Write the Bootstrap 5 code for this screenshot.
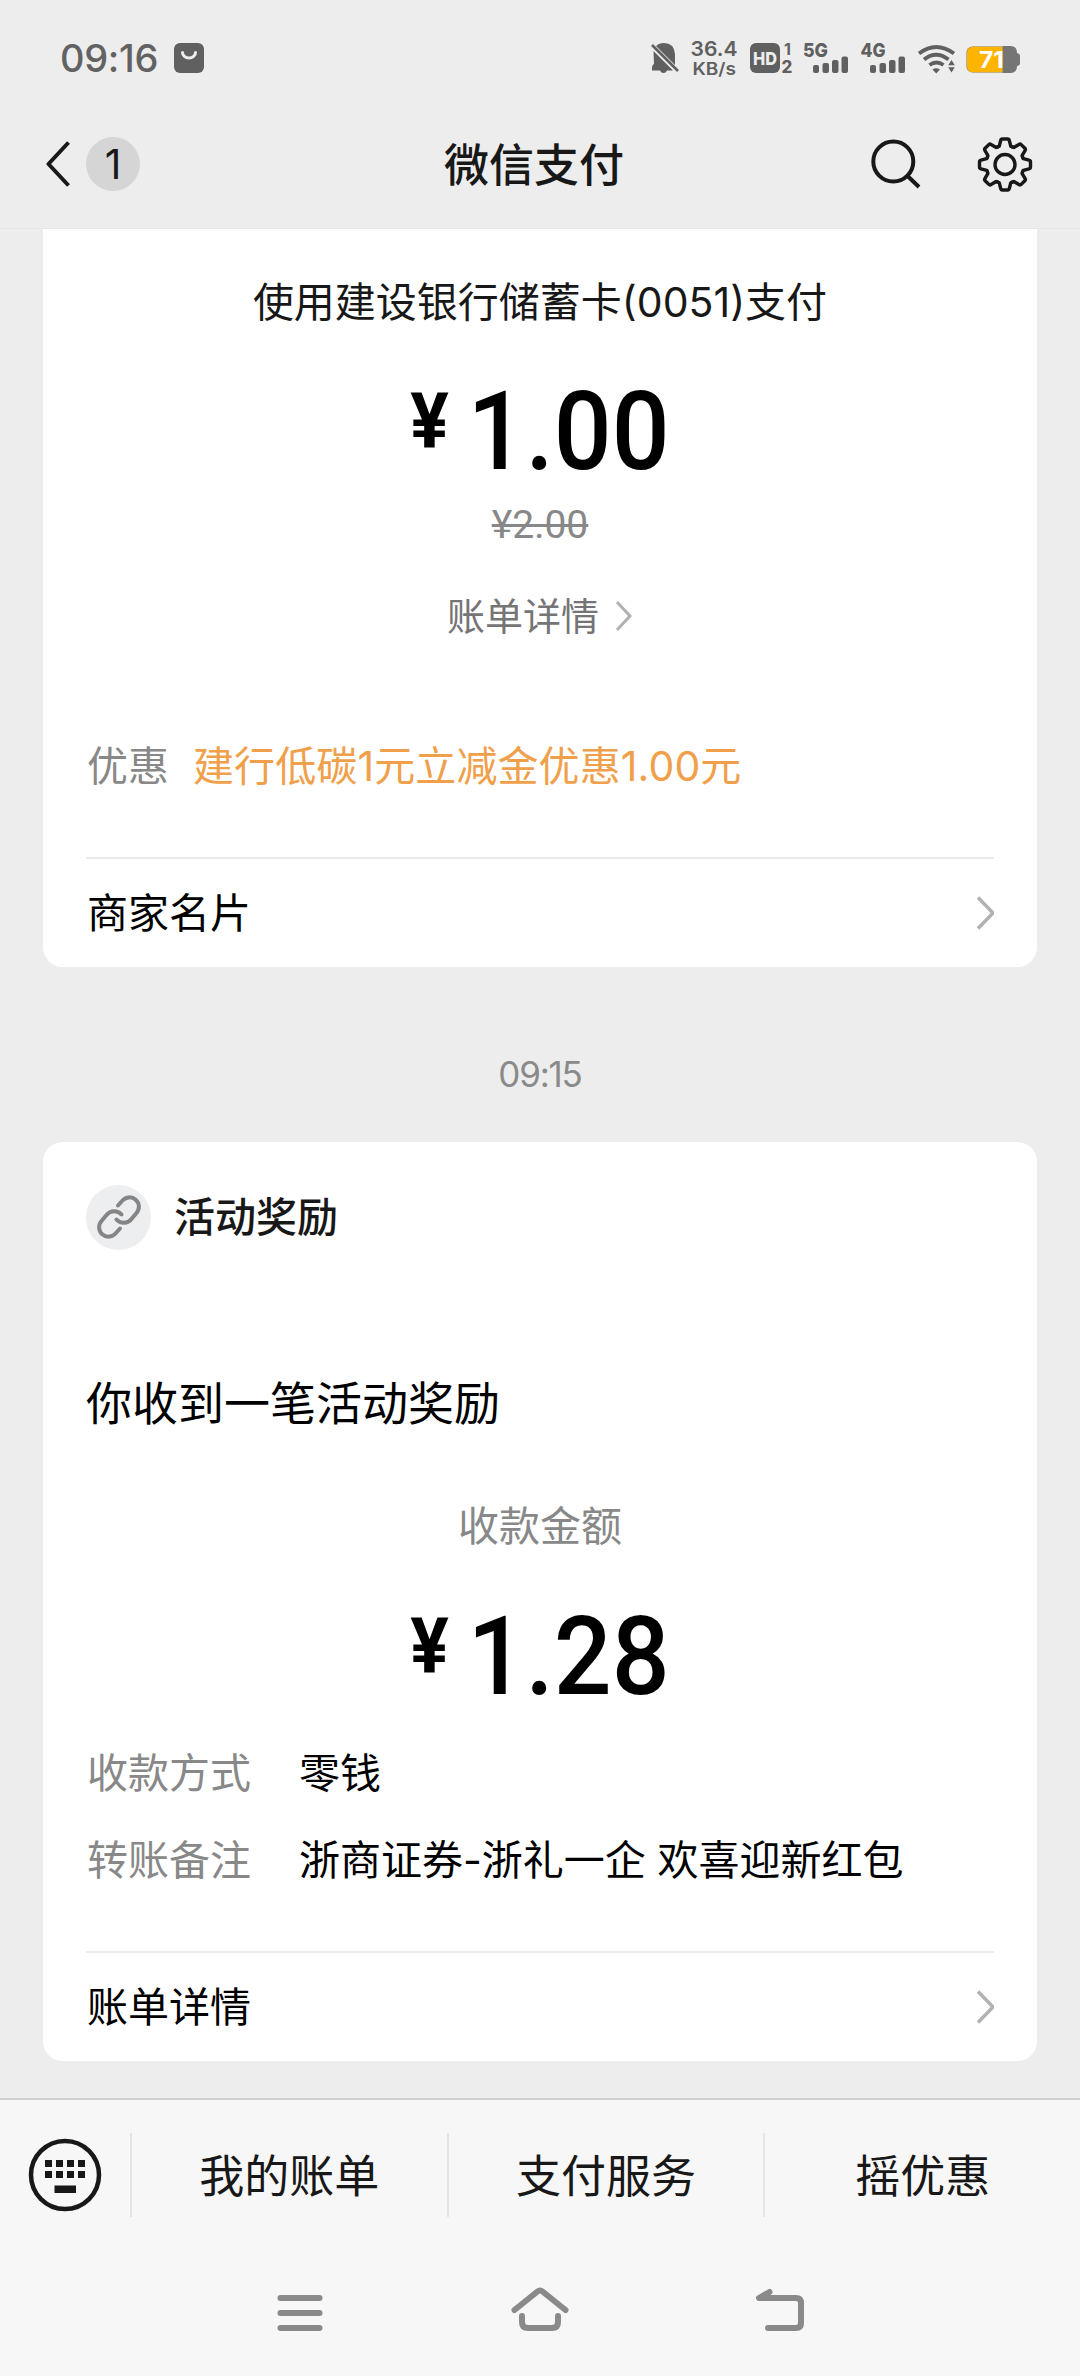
<!DOCTYPE html>
<html lang="zh-CN">
<head>
<meta charset="utf-8">
<meta name="viewport" content="width=device-width, initial-scale=1">
<title>微信支付</title>
<link href="https://cdn.jsdelivr.net/npm/bootstrap@5.3.0/dist/css/bootstrap.min.css" rel="stylesheet">
<style>
body{background:#ededed;color:#000;font-family:Inter,"Noto Sans CJK SC",sans-serif;font-size:41px;line-height:1;overflow:hidden}
svg{display:block;flex:none}
.screen{width:1080px;height:2376px}
.status{height:115px;color:#626262;padding-left:60px;font-size:38px}
.status-svg text{font-family:Inter,sans-serif}
.clock{letter-spacing:-.3px;width:114px}
.topbar{height:114px;padding:0 46px 15px;border-bottom:1px solid #e6e6e6;color:#181818}
.side{width:240px}
.unread{width:54px;height:54px;background:#d5d5d5;font-size:41px;margin-left:16px}
.title{font-size:45px;padding:2px 12px 0 0}
.msg{margin:0 43px;background:#fff;border:0;border-radius:20px}
.msg-first{border-radius:0 0 20px 20px}
.ink{color:#181818}
.grey{color:#888}
.amber{color:#f0a04b;letter-spacing:.1px}
.h-method{height:146px}
.h-sum{height:111px}
.h-old{height:76px;padding-top:2px;font-family:Roboto,sans-serif;font-size:39px}
.h-bill{height:110px;padding-bottom:2px;font-size:38px;color:#757575}
.h-promo{height:185px;padding:3px 44px 0}
.msg-foot{height:110px;margin:0 43px;padding:0 0 0 1px;border-top:2px solid #ebebeb}
.sum{font-family:Roboto,sans-serif;font-weight:500;transform:scaleX(.935);padding-top:4px}
.sum .yen{font-size:77px;font-weight:700;margin:-20px 20px 0 0}
.sum .num{font-size:109px}
.stamp{height:175px;padding-top:39px;font-size:35px;letter-spacing:-1.2px;color:#8a8a8a}
.h-head{height:150px;padding:0 43px}
.ring{width:65px;height:65px;background:#edeef0;margin-right:23px}
.h-title{height:180px;padding:42px 43px 0;font-size:46px}
.h-label{height:109px}
.h-sum2{height:149px}
.h-kv{height:87px;padding:0 44px}
.kv-key{width:212px}
.gap-end{height:47px}
.menubar{height:152px;background:#f7f7f7;border-top:2px solid #d0d0d0;font-size:45px;color:#181818}
.kb{width:130px}
.menu-item{height:84px;padding-top:3px;border-left:2px solid #e4e4e4}
.navkeys{height:126px;background:#f7f7f7}
</style>
</head>
<body>
<div class="screen d-flex flex-column">

  <div class="status d-flex align-items-center fw-medium">
    <span class="clock">09:16</span>
    <svg width="30" height="30" viewBox="0 0 30 30"><rect width="30" height="30" rx="6" fill="#606060"/><path d="M8.5 9.500a6.500 5.500 0 0 0 13 0" fill="none" stroke="#ededed" stroke-width="3" stroke-linecap="round"/></svg>
    <svg class="status-svg ms-auto me-5" width="390" height="60" viewBox="642 28 390 60" fill="#606060">
      <!-- muted bell -->
      <path d="M656 46q3-3 8-3 10 0 11 11v11zM653.500 51L673 70.500h-6q-1 2.500-3.500 2.500t-3.500-2.500h-8v-4l2-3z"/>
      <path d="M652 45l26 26" stroke="#606060" stroke-width="2.600" fill="none"/>
      <text x="690.500" y="56" font-size="20.500" font-weight="600" textLength="47" lengthAdjust="spacingAndGlyphs">36.4</text>
      <text x="692.500" y="74.500" font-size="17" font-weight="600" textLength="43.500" lengthAdjust="spacingAndGlyphs">KB/s</text>
      <!-- HD voice -->
      <rect x="750" y="43" width="30" height="30" rx="6"/>
      <text x="753" y="64.500" font-size="18" font-weight="800" fill="#ededed" textLength="24" lengthAdjust="spacingAndGlyphs">HD</text>
      <text x="784" y="55" font-size="16" font-weight="700">1</text>
      <text x="781.500" y="72.500" font-size="17" font-weight="800">2</text>
      <!-- two SIM signals -->
      <text x="803" y="57" font-size="19" font-weight="800" textLength="25" lengthAdjust="spacingAndGlyphs">5G</text>
      <g id="bars"><rect x="813" y="65" width="6" height="8" rx="2"/><rect x="822.500" y="63" width="6.500" height="10" rx="2"/><rect x="832" y="60" width="6.500" height="13" rx="2"/><rect x="841.500" y="56.500" width="6.500" height="16.500" rx="2"/></g>
      <text x="860.500" y="57" font-size="19" font-weight="800" textLength="25" lengthAdjust="spacingAndGlyphs">4G</text>
      <use href="#bars" x="57"/>
      <!-- wifi -->
      <g fill="none" stroke="#606060" stroke-width="3.800"><path d="M919 53.500q17-13 35 0M924 59.500q12-9.500 24.500 0M929.500 65q7-5 14 0"/></g>
      <path d="M932.500 69.500q3.500-2.500 7.500 0l-3.800 4z"/>
      <path d="M951.500 60l3.300 5.200h-6.600zM951.500 72.500l3.300-5.200h-6.600z"/>
      <!-- battery -->
      <path d="M1002.500 46h8q6.500 0 6.500 7 3 .5 3 3v7q0 2.500-3 3 0 7-6.500 7h-8z" fill="#757575"/>
      <rect x="966.500" y="46.500" width="50" height="26" rx="6" fill="#757575"/>
      <path d="M1002.500 46.800h-29.500q-6 0-6 6v13.400q0 6 6 6h29.500z" fill="#ffb400"/>
      <text x="979" y="67.500" font-size="23" font-weight="700" fill="#fff" textLength="25" lengthAdjust="spacingAndGlyphs">71</text>
    </svg>
  </div>

  <header class="topbar d-flex align-items-center justify-content-between">
    <div class="side d-flex align-items-center">
      <svg width="24" height="46" viewBox="0 0 24 46" fill="none" stroke="#181818" stroke-width="4" stroke-linejoin="round"><path d="M22.500 1.500L2.500 23l20 21.500"/></svg>
      <span class="unread rounded-circle d-flex align-items-center justify-content-center">1</span>
    </div>
    <div class="title fw-medium">微信支付</div>
    <div class="side d-flex align-items-center justify-content-end">
      <svg width="180" height="60" viewBox="854 134 180 60" fill="none" stroke="#181818" stroke-width="4">
        <circle cx="893.300" cy="161.500" r="20"/><path d="M907 175.500l12 11.500"/>
        <g transform="translate(1005 164.500)" stroke-width="3.400" stroke-linecap="round" stroke-linejoin="round">
          <circle r="10"/>
          <path id="tooth" d="M-7.300-17.600L-5.800-18.300L-4.300-24Q-4-25.500-2.600-25.500H2.600Q4-25.500 4.300-24L5.800-18.300L7.300-17.600"/>
          <use href="#tooth" transform="rotate(45)"/><use href="#tooth" transform="rotate(90)"/><use href="#tooth" transform="rotate(135)"/><use href="#tooth" transform="rotate(180)"/><use href="#tooth" transform="rotate(225)"/><use href="#tooth" transform="rotate(270)"/><use href="#tooth" transform="rotate(315)"/>
        </g>
      </svg>
    </div>
  </header>

  <section class="card msg msg-first">
    <div class="h-method ink d-flex align-items-center justify-content-center">使用建设银行储蓄卡(0051)支付</div>
    <div class="h-sum sum d-flex align-items-center justify-content-center"><span class="yen">¥</span><span class="num">1.00</span></div>
    <div class="h-old grey d-flex align-items-center justify-content-center"><s>¥2.00</s></div>
    <div class="h-bill d-flex align-items-center justify-content-center">账单详情
      <svg class="ms-3" width="18" height="32" viewBox="0 0 18 32" fill="none" stroke="#b0b0b0" stroke-width="3"><path d="M2 2l13 14L2 30"/></svg>
    </div>
    <div class="h-promo d-flex align-items-center"><span class="grey">优惠</span><span class="amber ms-4">建行低碳1元立减金优惠1.00元</span></div>
    <div class="msg-foot d-flex align-items-center justify-content-between">商家名片
      <svg width="20" height="36" viewBox="0 0 20 36" fill="none" stroke="#b2b2b2" stroke-width="3.500"><path d="M4 2.500L19 18 4 33.500"/></svg>
    </div>
  </section>

  <div class="stamp d-flex align-items-center justify-content-center">09:15</div>

  <section class="card msg">
    <div class="h-head ink d-flex align-items-center fw-medium">
      <span class="ring rounded-circle d-flex align-items-center justify-content-center">
        <svg width="46" height="46" viewBox="0 0 46 46" fill="none" stroke="#858585" stroke-width="4" stroke-linecap="round"><path id="chain" d="M22 11.500l4.500-5a9.300 9.300 0 0 1 14 12.500l-5 6a9.700 9.700 0 0 1-15 .5"/><use href="#chain" transform="rotate(180 23 23)"/></svg>
      </span>活动奖励
    </div>
    <div class="h-title d-flex align-items-center">你收到一笔活动奖励</div>
    <div class="h-label grey d-flex align-items-center justify-content-center">收款金额</div>
    <div class="h-sum2 sum d-flex align-items-center justify-content-center"><span class="yen">¥</span><span class="num">1.28</span></div>
    <div class="h-kv d-flex align-items-center"><span class="kv-key grey">收款方式</span><span>零钱</span></div>
    <div class="h-kv d-flex align-items-center"><span class="kv-key grey">转账备注</span><span>浙商证券-浙礼一企 欢喜迎新红包</span></div>
    <div class="gap-end"></div>
    <div class="msg-foot d-flex align-items-center justify-content-between">账单详情
      <svg width="20" height="36" viewBox="0 0 20 36" fill="none" stroke="#b2b2b2" stroke-width="3.500"><path d="M4 2.500L19 18 4 33.500"/></svg>
    </div>
  </section>

  <footer class="mt-auto">
    <div class="menubar d-flex align-items-center">
      <div class="kb d-flex justify-content-center">
        <svg width="74" height="74" viewBox="0 0 74 74" fill="#181818"><circle cx="37" cy="37" r="34" fill="none" stroke="#181818" stroke-width="4.500"/><path d="M17 22h7v7h-7zM28 22h7v7h-7zM39 22h7v7h-7zM50 22h7v7h-7zM17 33h7v7h-7zM28 33h7v7h-7zM39 33h7v7h-7zM50 33h7v7h-7zM26.500 47.500h21.500v7.500h-21.500z"/></svg>
      </div>
      <div class="menu-item col d-flex align-items-center justify-content-center">我的账单</div>
      <div class="menu-item col d-flex align-items-center justify-content-center">支付服务</div>
      <div class="menu-item col d-flex align-items-center justify-content-center">摇优惠</div>
    </div>
    <div class="navkeys d-flex align-items-center justify-content-center">
      <svg width="540" height="60" viewBox="270 2283 540 60" fill="none" stroke="#8a8a8a" stroke-width="6" stroke-linecap="round" stroke-linejoin="round">
        <path d="M280.500 2298h39M280.500 2313h39M280.500 2328h39"/>
        <path d="M514.500 2310l23-18.500q2.500-2 5 0l23 18.500M522 2316v6q0 6 6 6h24q6 0 6-6v-6"/>
        <path d="M769.500 2292l-10.500 6h37q5 0 5 5v20q0 5-5 5h-28"/>
      </svg>
    </div>
  </footer>
</div>
<script src="https://cdn.jsdelivr.net/npm/bootstrap@5.3.0/dist/js/bootstrap.bundle.min.js"></script>
</body>
</html>
